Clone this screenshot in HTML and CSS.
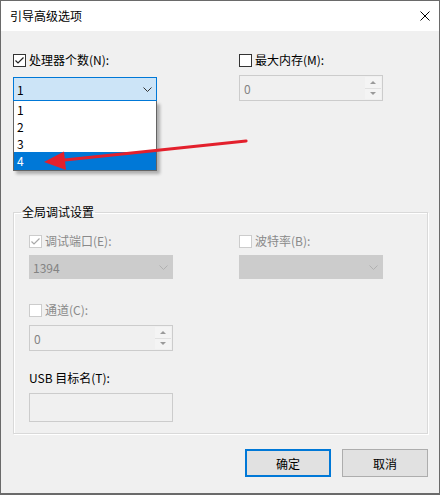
FILE: index.html
```html
<!DOCTYPE html>
<html lang="zh-CN">

<head>
    <meta charset="UTF-8">
    <title>引导高级选项</title>
    <link rel="stylesheet" href="styles.css">
</head>

<body>
    <div class="window">
        <div class="titlebar">
            <span class="title">引导高级选项</span>
            <svg class="close" width="10" height="10" viewBox="0 0 10 10">
                <path d="M0.5 0.5 L9.5 9.5 M9.5 0.5 L0.5 9.5" stroke="#000" stroke-width="1" fill="none" />
            </svg>
        </div>

        <div class="content">
            <div class="columns">
                <div class="field">
                    <label class="check">
                        <span class="box">
                            <svg width="11" height="11" viewBox="0 0 11 11">
                                <path d="M1.5 5.5 L4 8 L9.5 2.5" stroke="#222" stroke-width="1.2" fill="none" />
                            </svg>
                        </span>
                        处理器个数(N):
                    </label>
                    <div class="combo-wrap">
                        <div class="combo open">
                            <span>1</span>
                            <svg width="9" height="5" viewBox="0 0 9 5">
                                <path d="M0.5 0.5 L4.5 4.5 L8.5 0.5" stroke="#333" fill="none" />
                            </svg>
                        </div>
                        <!-- open dropdown list -->
                        <ul class="droplist">
                            <li>1</li>
                            <li>2</li>
                            <li>3</li>
                            <li class="selected">4</li>
                        </ul>
                    </div>
                </div>
                <div class="field">
                    <label class="check"><span class="box"></span>最大内存(M):</label>
                    <div class="spin disabled">
                        <span class="value">0</span>
                        <span class="spin-buttons">
                            <span class="up"></span>
                            <span class="down"></span>
                        </span>
                    </div>
                </div>
            </div>

            <fieldset class="group">
                <legend>全局调试设置</legend>
                <div class="group-grid">
                    <div class="field">
                        <label class="check disabled">
                            <span class="box">
                                <svg width="11" height="11" viewBox="0 0 11 11">
                                    <path d="M1.5 5.5 L4 8 L9.5 2.5" stroke="#a8a8a8" stroke-width="1.2" fill="none" />
                                </svg>
                            </span>
                            调试端口(E):
                        </label>
                        <div class="combo disabled">
                            <span>1394</span>
                            <svg width="9" height="5" viewBox="0 0 9 5">
                                <path d="M0.5 0.5 L4.5 4.5 L8.5 0.5" stroke="#b0b0b0" fill="none" />
                            </svg>
                        </div>
                    </div>
                    <div class="field">
                        <label class="check disabled"><span class="box"></span>波特率(B):</label>
                        <div class="combo disabled">
                            <span></span>
                            <svg width="9" height="5" viewBox="0 0 9 5">
                                <path d="M0.5 0.5 L4.5 4.5 L8.5 0.5" stroke="#b0b0b0" fill="none" />
                            </svg>
                        </div>
                    </div>

                    <div class="field row-two">
                        <label class="check disabled"><span class="box"></span>通道(C):</label>
                        <div class="spin disabled">
                            <span class="value">0</span>
                            <span class="spin-buttons">
                                <span class="up"></span>
                                <span class="down"></span>
                            </span>
                        </div>
                    </div>
                    <div></div>

                    <div class="field row-three">
                        <label class="plain">USB 目标名(T):</label>
                        <div class="textbox"></div>
                    </div>
                </div>
            </fieldset>

            <div class="buttons">
                <button class="btn primary">确定</button>
                <button class="btn">取消</button>
            </div>
        </div>

        <!-- red annotation arrow -->
        <svg class="arrow" width="440" height="495" viewBox="0 0 440 495">
            <line x1="246" y1="141" x2="60" y2="160.5" stroke="#e3202c" stroke-width="3.2" stroke-linecap="round" />
            <polygon points="44,162 64,151.5 66,170" fill="#e3202c" />
        </svg>
    </div>
</body>

</html>
```

FILE: styles.css
```css
body {
    margin: 0;
    font-family: "Noto Sans CJK SC", "Microsoft YaHei", sans-serif;
    font-size: 12px;
    color: #000;
}

.window {
    position: relative;
    width: 440px;
    height: 495px;
    box-sizing: border-box;
    border: 1px solid #6a6a6a;
    border-bottom-width: 2px;
    background: #f0f0f0;
    overflow: hidden;
}

.titlebar {
    height: 30px;
    background: #fff;
    display: flex;
    align-items: center;
    justify-content: space-between;
    padding: 0 9px 0 9px;
}

.title {
    line-height: 16px;
}

.content {
    padding: 21px 11px 0 12px;
}

.columns {
    display: grid;
    grid-template-columns: 144px 144px;
    column-gap: 82px;
}

.field {
    position: relative;
    display: flex;
    flex-direction: column;
}

.check,
.plain {
    display: flex;
    align-items: center;
    gap: 3px;
    height: 16px;
    line-height: 16px;
}

.check.disabled {
    color: #8a8a8a;
}

.box {
    width: 13px;
    height: 13px;
    box-sizing: border-box;
    border: 1px solid #333;
    background: #fff;
    display: flex;
    align-items: center;
    justify-content: center;
}

.check.disabled .box {
    border-color: #cccccc;
}

.combo-wrap {
    position: relative;
    margin-top: 9px;
}

.combo {
    margin-top: 6px;
    height: 24px;
    box-sizing: border-box;
    display: flex;
    align-items: center;
    justify-content: space-between;
    padding: 0 4px 0 3px;
    border: 1px solid #cccccc;
}

.combo.open {
    margin-top: 0;
    border-color: #0078d7;
    background: #cce4f7;
}

.combo.disabled {
    background: #cccccc;
    color: #838383;
}

.droplist {
    position: absolute;
    top: 100%;
    left: 0;
    width: 144px;
    box-sizing: border-box;
    margin: 0;
    padding: 0;
    list-style: none;
    background: #fff;
    border: 1px solid #646464;
    border-top: none;
    box-shadow: 3px 3px 3px rgba(0, 0, 0, 0.28);
    z-index: 1;
}

.droplist li {
    height: 17px;
    line-height: 17px;
    padding-left: 3px;
}

.droplist li.selected {
    background: #0078d7;
    color: #fff;
    height: 18px;
}

.spin {
    margin-top: 7px;
    height: 26px;
    box-sizing: border-box;
    border: 1px solid #cccccc;
    display: flex;
    align-items: stretch;
    justify-content: space-between;
}

.spin.disabled {
    background: #f0f0f0;
    color: #838383;
}

.spin .value {
    padding-left: 4px;
    display: flex;
    align-items: center;
}

.spin-buttons {
    width: 16px;
    display: flex;
    flex-direction: column;
    margin: 1px;
    background: #f4f4f4;
}

.spin-buttons span {
    flex: 1;
    display: flex;
    align-items: center;
    justify-content: center;
}

.spin-buttons .up {
    border-bottom: 1px solid #e0e0e0;
}

.spin-buttons .up::after {
    content: "";
    border-left: 3px solid transparent;
    border-right: 3px solid transparent;
    border-bottom: 3px solid #9a9a9a;
}

.spin-buttons .down::after {
    content: "";
    border-left: 3px solid transparent;
    border-right: 3px solid transparent;
    border-top: 3px solid #9a9a9a;
}

.group {
    margin: 103px 0 0;
    padding: 13px 15px 11px;
    border: 1px solid #d9d9d9;
    box-shadow: inset 1px 1px 0 #fff, 1px 1px 0 #fff;
    min-width: 0;
}

.group legend {
    padding: 0 1px;
    margin-left: -8px;
    line-height: 16px;
}

.group-grid {
    display: grid;
    grid-template-columns: 144px 144px;
    column-gap: 66px;
}

.row-two {
    margin-top: 23px;
}

.row-three {
    margin-top: 19px;
}

.textbox {
    margin-top: 7px;
    height: 29px;
    box-sizing: border-box;
    border: 1px solid #cccccc;
    background: #f0f0f0;
}

.buttons {
    display: flex;
    justify-content: flex-end;
    gap: 11px;
    margin-top: 15px;
}

.btn {
    width: 86px;
    height: 28px;
    box-sizing: border-box;
    background: #e1e1e1;
    border: 1px solid #adadad;
    font-family: inherit;
    font-size: 12px;
    color: #000;
    padding: 0;
}

.btn.primary {
    border: 2px solid #0078d7;
}

.arrow {
    position: absolute;
    top: -1px;
    left: -1px;
    pointer-events: none;
    z-index: 2;
}
```
